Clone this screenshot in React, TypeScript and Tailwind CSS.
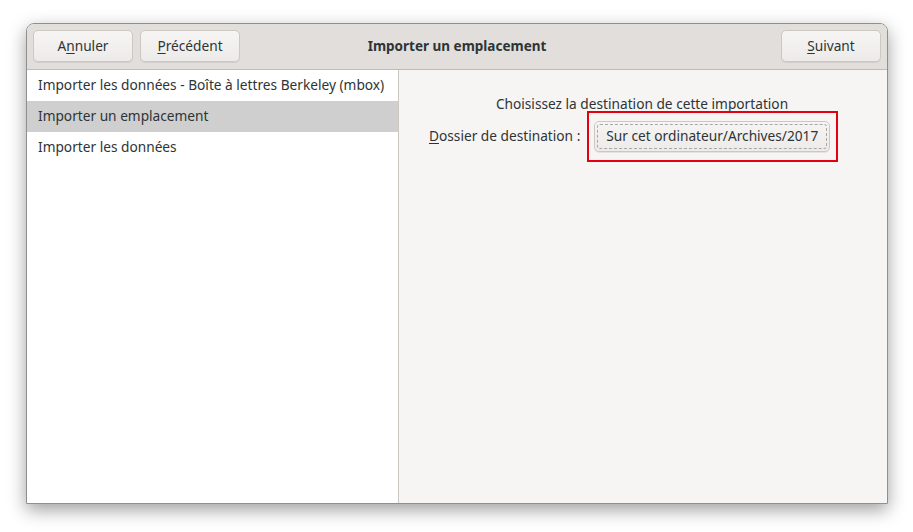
import React from 'react';

const font = { fontFamily: '"Noto Sans", "Open Sans", sans-serif' };

const steps = [
    'Importer les données - Boîte à lettres Berkeley (mbox)',
    'Importer un emplacement',
    'Importer les données',
];

// Mnemonic letter is drawn underlined, like GTK buttons with access keys
function Mnemonic({ text, index }: { text: string; index: number }) {
    return (
        <>
            {text.slice(0, index)}
            <span className="underline underline-offset-2">{text[index]}</span>
            {text.slice(index + 1)}
        </>
    );
}

function HeaderButton({ children, className = '' }: { children: React.ReactNode; className?: string }) {
    return (
        <button
            type="button"
            className={`h-[32px] rounded-[5px] border border-[#cdc7c2] bg-gradient-to-b from-[#f6f5f4] to-[#edebe9] text-[13.7px] text-[#2e3436] shadow-[0_1px_0_rgba(0,0,0,0.07)] ${className}`}
        >
            {children}
        </button>
    );
}

export default function App() {
    const selected = 1;

    return (
        <div className="h-[532px] w-[913px] bg-white pt-[23px] pl-[26px]" style={font}>
            <div className="flex h-[481px] w-[862px] flex-col overflow-hidden rounded-t-[8px] border border-[#8f8f8f] shadow-[0_6px_18px_rgba(0,0,0,0.38)]">
                {/* Header bar: title centred on the whole window */}
                <div className="grid h-[46px] shrink-0 grid-cols-[1fr_auto_1fr] items-center border-b border-[#c0bbb6] bg-[#e1dedb] px-[6px] pb-[1px]">
                    <div className="flex gap-[7px]">
                        <HeaderButton className="w-[100px]">
                            <Mnemonic text="Annuler" index={1} />
                        </HeaderButton>
                        <HeaderButton className="w-[100px]">
                            <Mnemonic text="Précédent" index={0} />
                        </HeaderButton>
                    </div>
                    <div className="text-center text-[13.5px] font-bold text-[#2e3436]">
                        Importer un emplacement
                    </div>
                    <div className="flex justify-end">
                        <HeaderButton className="w-[100px]">
                            <Mnemonic text="Suivant" index={0} />
                        </HeaderButton>
                    </div>
                </div>

                <div className="flex min-h-0 flex-1">
                    {/* Step list */}
                    <div className="w-[372px] shrink-0 border-r border-[#cdc7c2] bg-white">
                        {steps.map((step, i) => (
                            <div
                                key={step}
                                className={`flex h-[31px] items-center whitespace-nowrap px-[11px] text-[13.7px] text-[#2e3436] ${
                                    i === selected ? 'bg-[#cfcfcf]' : ''
                                }`}
                            >
                                {step}
                            </div>
                        ))}
                    </div>

                    {/* Step page */}
                    <div className="flex-1 bg-[#f6f5f4] text-[13.7px] text-[#2e3436]">
                        <div className="pt-[24px] pr-[2px] text-center leading-[20px]">
                            Choisissez la destination de cette importation
                        </div>
                        <div className="mt-[7px] flex items-center pl-[30px]">
                            <span className="mr-[14px] whitespace-nowrap">
                                <Mnemonic text="Dossier de destination :" index={0} />
                            </span>
                            <div className="relative">
                                <button
                                    type="button"
                                    className="h-[31px] w-[236px] rounded-[5px] border border-[#cdc7c2] bg-gradient-to-b from-[#f6f5f4] to-[#edebe9] p-[2px] shadow-[0_1px_0_rgba(0,0,0,0.07)]"
                                >
                                    <div className="flex h-full items-center justify-center whitespace-nowrap rounded-[3px] border border-dashed border-[#a9a6a3] text-[13.7px] text-[#2e3436]">
                                        Sur cet ordinateur/Archives/2017
                                    </div>
                                </button>
                                {/* highlight frame drawn over the folder chooser */}
                                <div className="pointer-events-none absolute -top-[10px] -right-[8px] -bottom-[10px] -left-[7px] border-2 border-[#e4000f]" />
                            </div>
                        </div>
                    </div>
                </div>
            </div>
        </div>
    );
}
